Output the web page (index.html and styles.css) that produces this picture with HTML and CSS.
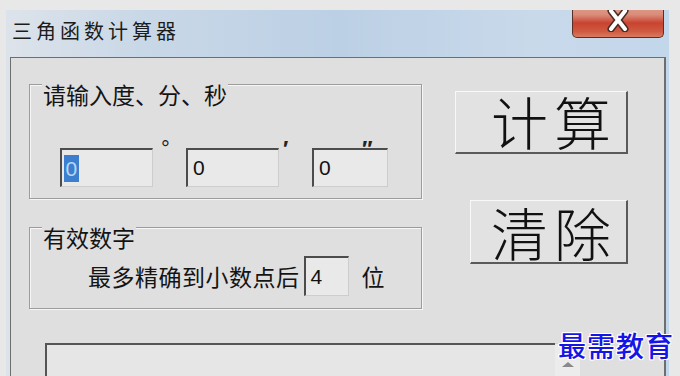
FILE: index.html
```html
<!DOCTYPE html>
<html lang="zh-CN">
<head>
    <meta charset="UTF-8">
    <meta name="viewport" content="width=device-width, initial-scale=1.0">
    <title>三角函数计算器</title>
    <link rel="stylesheet" href="styles.css">
</head>
<body>
    <div class="window">
        <div class="title-bar">
            <span class="title-text">三角函数计算器</span>
            <button class="close-btn" aria-label="关闭">
                <svg width="26" height="24" viewBox="0 0 26 24">
                    <path d="M6 3 L20 21 M20 3 L6 21" stroke="#4a2a26" stroke-width="7" stroke-linecap="round"/>
                    <path d="M6 3 L20 21 M20 3 L6 21" stroke="#ffffff" stroke-width="4" stroke-linecap="round"/>
                </svg>
            </button>
        </div>

        <div class="client">
            <div class="top-row">
                <div class="left-col">
                    <div class="group group-angle">
                        <span class="group-title">请输入度、分、秒</span>
                        <div class="angle-row">
                            <div class="field field-wide"><span class="selected">0</span></div>
                            <span class="mark mark-deg">°</span>
                            <div class="field field-wide">0</div>
                            <span class="mark mark-min">′</span>
                            <div class="field field-narrow">0</div>
                            <span class="mark mark-sec">″</span>
                        </div>
                    </div>

                    <div class="group group-digits">
                        <span class="group-title">有效数字</span>
                        <div class="digits-row">
                            <span class="label">最多精确到小数点后</span>
                            <div class="field field-small">4</div>
                            <span class="label unit">位</span>
                        </div>
                    </div>
                </div>

                <div class="right-col">
                    <button class="big-btn btn-calc">计算</button>
                    <button class="big-btn btn-clear">清除</button>
                </div>
            </div>

            <div class="output">
                <div class="output-box"></div>
                <div class="scrollbar"><span class="arrow-up"></span></div>
            </div>
        </div>
    </div>

    <div class="watermark">最需教育</div>
</body>
</html>
```

FILE: styles.css
```css
* {
    margin: 0;
    padding: 0;
    box-sizing: border-box;
}

body {
    width: 680px;
    height: 376px;
    overflow: hidden;
    background: #e8e8e8;
    font-family: "Noto Sans CJK SC", "Liberation Sans", sans-serif;
    color: #141414;
    position: relative;
}

.window {
    margin: 10px 0 0 6px;
    width: 663px;
    height: 366px;
    overflow: hidden;
    background: linear-gradient(90deg, #dde3ea 0%, #c9d8e7 20%, #bcd0e5 50%, #c8d9ea 80%, #c3d7ea 100%);
}

.title-bar {
    height: 47px;
    display: flex;
    justify-content: space-between;
    align-items: flex-start;
}

.title-text {
    font-size: 20px;
    line-height: 24px;
    letter-spacing: 4px;
    padding: 9px 0 0 6px;
    color: #1c1c1c;
}

.close-btn {
    margin: -10px 5px 0 0;
    width: 92px;
    height: 38px;
    border: 1px solid #5a2f28;
    border-top: none;
    border-radius: 0 0 5px 5px;
    background: linear-gradient(180deg, #e6a898 0%, #d98c7a 40%, #c9432f 62%, #cf5a42 85%, #da7a60 100%);
    display: flex;
    align-items: center;
    justify-content: center;
    padding-top: 2px;
}

.client {
    margin: 0 3px 0 4px;
    height: 319px;
    overflow: hidden;
    background: #dfdfdf;
    border-top: 1px solid #6e6e6e;
    border-left: 1px solid #6e6e6e;
    border-right: 2px solid #6e6e6e;
}

.top-row {
    display: flex;
}

.left-col {
    padding-left: 18px;
    width: 411px;
}

.group {
    border: 1px solid #9c9c9c;
    box-shadow: 1px 1px 0 #f6f6f6, inset 1px 1px 0 #f6f6f6;
    width: 393px;
}

.group-angle {
    margin-top: 26px;
    height: 115px;
}

.group-digits {
    margin-top: 28px;
    height: 82px;
}

.group-title {
    display: inline-block;
    background: #dfdfdf;
    font-size: 23px;
    line-height: 24px;
    padding: 0 1px;
    margin-left: 12px;
}

.group-angle .group-title {
    margin-top: -11px;
}

.group-digits .group-title {
    margin-top: -8px;
}

.angle-row {
    display: flex;
    align-items: flex-start;
    margin-top: 39px;
    padding-left: 30px;
}

.field {
    height: 39px;
    background: #e9e9e9;
    border-top: 2px solid #4c4c4c;
    border-left: 2px solid #4c4c4c;
    border-right: 1px solid #cdcdcd;
    border-bottom: 1px solid #cdcdcd;
    font-family: "Liberation Sans", sans-serif;
    font-size: 21px;
    display: flex;
    align-items: center;
    padding-left: 5px;
    color: #111;
}

.field-wide {
    width: 93px;
}

.field-narrow {
    width: 76px;
}

.field-small {
    width: 45px;
    height: 40px;
}

.selected {
    display: inline-block;
    height: 27px;
    line-height: 27px;
    padding: 0 1.5px;
    margin-left: -3px;
    background: #3d7fcf;
    color: #b7d6f6;
}

.mark {
    font-family: "Liberation Sans", sans-serif;
    font-size: 22px;
    line-height: 22px;
    margin-top: -10px;
    color: #222;
}

.mark-deg {
    width: 33px;
    padding-left: 8px;
}

.mark-min {
    width: 33px;
    padding-left: 4px;
    font-weight: bold;
}

.mark-sec {
    margin-left: -26px;
    font-weight: bold;
}

.digits-row {
    display: flex;
    align-items: center;
    margin-top: 4px;
    padding-left: 58px;
}

.label {
    font-size: 23px;
    line-height: 24px;
    letter-spacing: 0.5px;
    margin-right: 4px;
}

.unit {
    margin-left: 13px;
}

.right-col {
    width: 206px;
    display: flex;
    flex-direction: column;
    align-items: flex-end;
}

.big-btn {
    font-family: "Noto Sans CJK SC", sans-serif;
    font-weight: 300;
    font-size: 57px;
    line-height: 57px;
    letter-spacing: 6px;
    color: #111;
    background: #e2e2e2;
    border-top: 1px solid #f8f8f8;
    border-left: 1px solid #f8f8f8;
    border-right: 2px solid #5a5a5a;
    border-bottom: 2px solid #5a5a5a;
    display: flex;
    align-items: flex-start;
    justify-content: flex-end;
    padding: 0 9px 0 0;
}

.btn-calc {
    margin-top: 33px;
    width: 173px;
    height: 63px;
}

.btn-clear {
    margin-top: 46px;
    width: 158px;
    height: 64px;
    padding-top: 2px;
}

.output {
    display: flex;
    margin: 34px 0 0 34px;
}

.output-box {
    width: 510px;
    height: 40px;
    background: #e6e6e6;
    border-top: 2px solid #555;
    border-left: 2px solid #555;
}

.scrollbar {
    width: 25px;
    height: 40px;
    background: #ececec;
    border-top: 1px solid #d0d0d0;
    display: flex;
    justify-content: center;
    padding-top: 18px;
}

.arrow-up {
    width: 0;
    height: 0;
    border-left: 6px solid transparent;
    border-right: 6px solid transparent;
    border-bottom: 5px solid #8a8a8a;
}

.watermark {
    position: absolute;
    right: 6px;
    top: 327px;
    font-size: 28px;
    line-height: 36px;
    font-weight: 500;
    letter-spacing: 1px;
    color: #1515e8;
    text-shadow: 1px 0 0 #fff, -1px 0 0 #fff, 0 1px 0 #fff, 0 -1px 0 #fff, 1px 1px 0 #fff, -1px -1px 0 #fff, 1px -1px 0 #fff, -1px 1px 0 #fff;
}
```
